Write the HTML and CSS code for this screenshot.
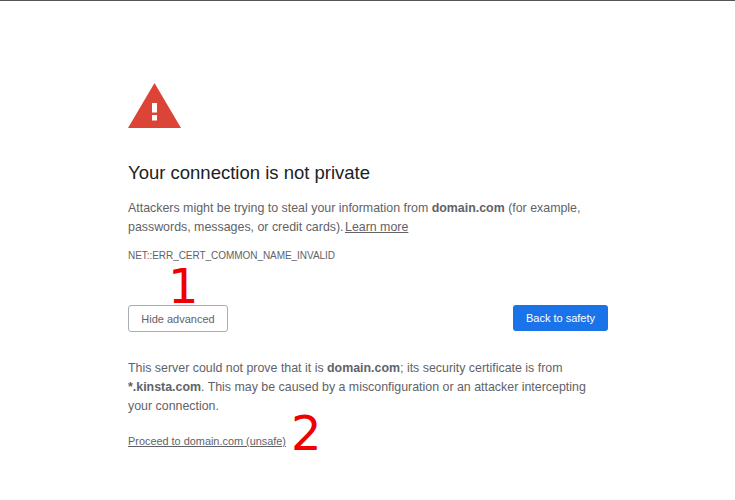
FILE: index.html
```html
<html>
	<head>
		<title>Privacy error</title>
		<meta name="viewport" content="width=device-width, initial-scale=1">
		<link rel="stylesheet" href="styles.css">
	</head>
	<body>
		<div class="page">
			<svg class="warnIcon" viewBox="0 0 53 46" width="53" height="46">
				<path d="M26.5 0 L53 45 L0 45 Z" fill="#db4437"/>
				<rect x="24" y="20" width="5" height="9.5" fill="#fff"/>
				<rect x="24" y="32" width="5" height="5.5" fill="#fff"/>
			</svg>

			<h1 class="title">Your connection is not private</h1>

			<p class="message">
				Attackers might be trying to steal your information from <b>domain.com</b> (for example,<br/>
				passwords, messages, or credit cards). <a href="#" class="learnMore">Learn more</a>
			</p>

			<div class="errorCode">NET::ERR_CERT_COMMON_NAME_INVALID</div>

			<div class="buttons">
				<button class="btn btnPlain">Hide advanced</button>
				<button class="btn btnBlue">Back to safety</button>
				<span class="marker markerOne">1</span>
			</div>

			<p class="message details">
				This server could not prove that it is <b>domain.com</b>; its security certificate is from<br/>
				<b>*.kinsta.com</b>. This may be caused by a misconfiguration or an attacker intercepting<br/>
				your connection.
			</p>

			<div class="proceedRow">
				<a href="#" class="proceed">Proceed to domain.com (unsafe)</a>
				<span class="marker markerTwo">2</span>
			</div>
		</div>
	</body>
</html>
```

FILE: styles.css
```css
html, body
{
	margin: 0;
	height: 100%;
	background-color: white;
	overflow: hidden;
}

body
{
	border-top: 1px solid #555;
	box-sizing: border-box;
	font-family: "Liberation Sans", Arial, sans-serif;
	color: #5f6368;
}

.page
{
	width: 480px;
	margin-left: 128px;
	padding-top: 82px;
}

.warnIcon
{
	display: block;
}

.title
{
	margin: 32px 0 0 0;
	font-size: 18.5px;
	line-height: 24px;
	font-weight: normal;
	color: #202124;
}

.message
{
	margin: 14px 0 0 0;
	font-size: 12.4px;
	line-height: 19px;
	white-space: nowrap;
}

.learnMore
{
	margin-left: -2px;
	color: #5f6368;
}

.errorCode
{
	margin-top: 12px;
	font-size: 10px;
	letter-spacing: -0.05px;
	line-height: 14px;
	color: #5f6368;
}

.buttons
{
	position: relative;
	display: flex;
	justify-content: space-between;
	align-items: flex-start;
	margin-top: 42px;
}

.btn
{
	height: 27px;
	padding: 0;
	border-radius: 3px;
	font-family: "Liberation Sans", Arial, sans-serif;
	font-size: 11px;
}

.btnPlain
{
	width: 100px;
	background-color: white;
	border: 1px solid #a9acb0;
	color: #5f6368;
}

.btnBlue
{
	width: 95px;
	height: 26px;
	background-color: #1a73e8;
	border: none;
	color: white;
}

.marker
{
	position: absolute;
	font-family: "DejaVu Sans", sans-serif;
	font-size: 48px;
	line-height: 48px;
	color: #f00000;
}

.markerOne
{
	left: 40px;
	top: -43px;
}

.details
{
	margin-top: 27px;
}

.proceedRow
{
	position: relative;
	margin-top: 18px;
	font-size: 10.9px;
	line-height: 14px;
}

.proceed
{
	color: #5f6368;
}

.markerTwo
{
	left: 163px;
	top: -25px;
}
```
